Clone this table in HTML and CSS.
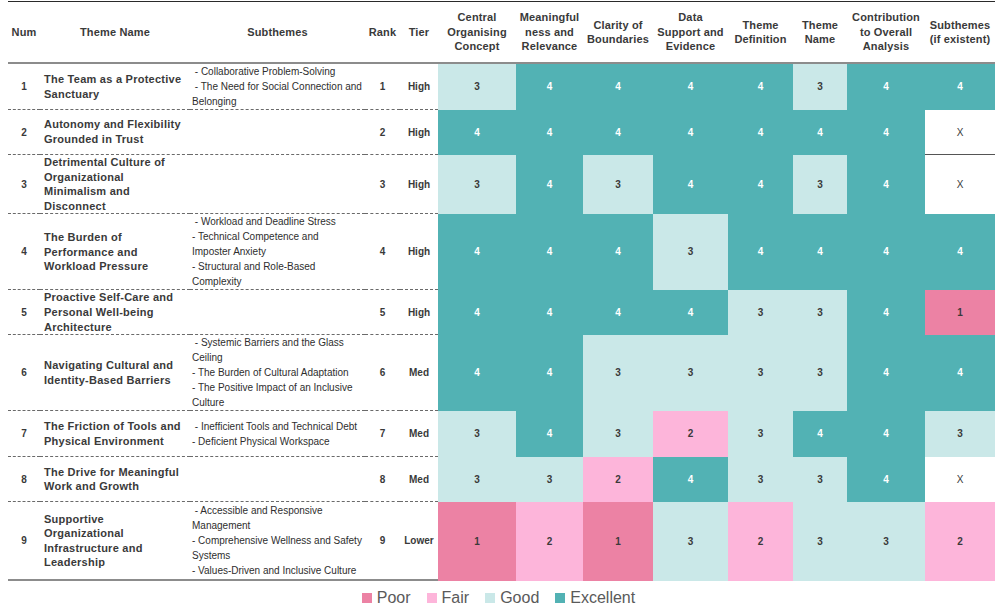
FILE: index.html
```html
<!DOCTYPE html>
<html lang="en">
<head>
<meta charset="utf-8">
<title>Theme Evaluation</title>
<link rel="stylesheet" href="styles.css">
</head>
<body>
<div class="wrap">
<table class="grid">
<colgroup>
<col class="w-num"><col class="w-theme"><col class="w-sub"><col class="w-rank"><col class="w-tier">
<col class="w-c1"><col class="w-c2"><col class="w-c3"><col class="w-c4"><col class="w-c5"><col class="w-c6"><col class="w-c7"><col class="w-c8">
</colgroup>
<thead>
<tr class="hdr">
<th>Num</th><th>Theme Name</th><th>Subthemes</th><th>Rank</th><th>Tier</th>
<th>Central<br>Organising<br>Concept</th>
<th>Meaningful<br>ness and<br>Relevance</th>
<th>Clarity of<br>Boundaries</th>
<th>Data<br>Support and<br>Evidence</th>
<th>Theme<br>Definition</th>
<th>Theme<br>Name</th>
<th>Contribution<br>to Overall<br>Analysis</th>
<th>Subthemes<br>(if existent)</th>
</tr>
</thead>
<tbody>
<tr class="r45">
<td class="num">1</td>
<td class="theme">The Team as a Protective<br>Sanctuary</td>
<td class="sub">&nbsp;- Collaborative Problem-Solving<br>&nbsp;- The Need for Social Connection and<br>Belonging</td>
<td class="num">1</td><td class="tier">High</td>
<td class="c-l">3</td><td class="c-t">4</td><td class="c-t">4</td><td class="c-t">4</td><td class="c-t">4</td><td class="c-l">3</td><td class="c-t">4</td><td class="c-t">4</td>
</tr>
<tr class="r45">
<td class="num">2</td>
<td class="theme">Autonomy and Flexibility<br>Grounded in Trust</td>
<td class="sub"></td>
<td class="num">2</td><td class="tier">High</td>
<td class="c-t">4</td><td class="c-t">4</td><td class="c-t">4</td><td class="c-t">4</td><td class="c-t">4</td><td class="c-t">4</td><td class="c-t">4</td><td class="c-x lined">X</td>
</tr>
<tr class="r59">
<td class="num">3</td>
<td class="theme">Detrimental Culture of<br>Organizational<br>Minimalism and<br>Disconnect</td>
<td class="sub"></td>
<td class="num">3</td><td class="tier">High</td>
<td class="c-l">3</td><td class="c-t">4</td><td class="c-l">3</td><td class="c-t">4</td><td class="c-t">4</td><td class="c-l">3</td><td class="c-t">4</td><td class="c-x">X</td>
</tr>
<tr class="r76">
<td class="num">4</td>
<td class="theme">The Burden of<br>Performance and<br>Workload Pressure</td>
<td class="sub">&nbsp;- Workload and Deadline Stress<br>- Technical Competence and<br>Imposter Anxiety<br>- Structural and Role-Based<br>Complexity</td>
<td class="num">4</td><td class="tier">High</td>
<td class="c-t">4</td><td class="c-t">4</td><td class="c-t">4</td><td class="c-l">3</td><td class="c-t">4</td><td class="c-t">4</td><td class="c-t">4</td><td class="c-t">4</td>
</tr>
<tr class="r45">
<td class="num">5</td>
<td class="theme">Proactive Self-Care and<br>Personal Well-being<br>Architecture</td>
<td class="sub"></td>
<td class="num">5</td><td class="tier">High</td>
<td class="c-t">4</td><td class="c-t">4</td><td class="c-t">4</td><td class="c-t">4</td><td class="c-l">3</td><td class="c-l">3</td><td class="c-t">4</td><td class="c-p">1</td>
</tr>
<tr class="r76">
<td class="num">6</td>
<td class="theme">Navigating Cultural and<br>Identity-Based Barriers</td>
<td class="sub">&nbsp;- Systemic Barriers and the Glass<br>Ceiling<br>- The Burden of Cultural Adaptation<br>- The Positive Impact of an Inclusive<br>Culture</td>
<td class="num">6</td><td class="tier">Med</td>
<td class="c-t">4</td><td class="c-t">4</td><td class="c-l">3</td><td class="c-l">3</td><td class="c-l">3</td><td class="c-l">3</td><td class="c-t">4</td><td class="c-t">4</td>
</tr>
<tr class="r46">
<td class="num">7</td>
<td class="theme">The Friction of Tools and<br>Physical Environment</td>
<td class="sub">&nbsp;- Inefficient Tools and Technical Debt<br>- Deficient Physical Workspace</td>
<td class="num">7</td><td class="tier">Med</td>
<td class="c-l">3</td><td class="c-t">4</td><td class="c-l">3</td><td class="c-f">2</td><td class="c-l">3</td><td class="c-t">4</td><td class="c-t">4</td><td class="c-l">3</td>
</tr>
<tr class="r45">
<td class="num">8</td>
<td class="theme">The Drive for Meaningful<br>Work and Growth</td>
<td class="sub"></td>
<td class="num">8</td><td class="tier">Med</td>
<td class="c-l">3</td><td class="c-l">3</td><td class="c-f">2</td><td class="c-t">4</td><td class="c-l">3</td><td class="c-l">3</td><td class="c-t">4</td><td class="c-x">X</td>
</tr>
<tr class="r79 last">
<td class="num">9</td>
<td class="theme">Supportive<br>Organizational<br>Infrastructure and<br>Leadership</td>
<td class="sub">&nbsp;- Accessible and Responsive<br>Management<br>- Comprehensive Wellness and Safety<br>Systems<br>- Values-Driven and Inclusive Culture</td>
<td class="num">9</td><td class="tier">Lower</td>
<td class="c-p">1</td><td class="c-f">2</td><td class="c-p">1</td><td class="c-l">3</td><td class="c-f">2</td><td class="c-l">3</td><td class="c-l">3</td><td class="c-f">2</td>
</tr>
</tbody>
</table>
</div>
<div class="legend">
<span class="item"><span class="sw sw-p"></span>Poor</span>
<span class="item"><span class="sw sw-f"></span>Fair</span>
<span class="item"><span class="sw sw-l"></span>Good</span>
<span class="item"><span class="sw sw-t"></span>Excellent</span>
</div>
</body>
</html>
```

FILE: styles.css
```css
html, body {
  margin: 0;
  padding: 0;
  background: #ffffff;
}

body {
  font-family: "Liberation Sans", Arial, sans-serif;
  color: #3a3a3a;
}

.wrap {
  padding: 1px 0 0 8px;
}

.grid {
  table-layout: fixed;
  border-collapse: separate;
  border-spacing: 0;
  width: 987px;
}

.w-num { width: 32px; }
.w-theme { width: 150px; }
.w-sub { width: 175px; }
.w-rank { width: 35px; }
.w-tier { width: 38px; }
.w-c1 { width: 78px; }
.w-c2 { width: 67px; }
.w-c3 { width: 70px; }
.w-c4 { width: 75px; }
.w-c5 { width: 65px; }
.w-c6 { width: 54px; }
.w-c7 { width: 78px; }
.w-c8 { width: 70px; }

.hdr { height: 63px; }

.hdr th {
  padding: 0;
  font-size: 11px;
  line-height: 14.5px;
  font-weight: 700;
  letter-spacing: 0.15px;
  color: #3a3a3a;
  text-align: center;
  vertical-align: middle;
  border-top: 1px solid #2a2a2a;
  border-bottom: 2px solid #8c8c8c;
  white-space: nowrap;
}

.grid td {
  padding: 0;
  vertical-align: middle;
  text-align: center;
  font-size: 10px;
  font-weight: 700;
  border-bottom: 1px dashed #6a6a6a;
  white-space: nowrap;
}

.r45 { height: 45px; }
.r46 { height: 46px; }
.r59 { height: 59px; }
.r76 { height: 76px; }
.r79 { height: 79px; }

.grid td.theme {
  text-align: left;
  padding-left: 4px;
  font-size: 11px;
  line-height: 14.6px;
  letter-spacing: 0.25px;
  color: #3a3a3a;
}

.grid td.sub {
  text-align: left;
  padding-left: 2px;
  font-size: 10px;
  line-height: 15px;
  font-weight: 400;
  color: #2e2e2e;
}

.grid td.num,
.grid td.tier {
  color: #3a3a3a;
}

.grid td.c-t,
.grid td.c-l,
.grid td.c-f,
.grid td.c-p {
  border-bottom: 1px solid transparent;
}

.c-t { background: #52b2b4; color: #ffffff; }
.c-l { background: #cae8e8; color: #3a3a3a; }
.c-f { background: #fdb5da; color: #3a3a3a; }
.c-p { background: #ec82a4; color: #3a3a3a; }

.grid td.c-x {
  background: #ffffff;
  color: #3a3a3a;
  font-weight: 400;
  border-bottom: 1px solid transparent;
}

.grid td.c-x.lined {
  border-bottom: 1px solid #555555;
}

.last td {
  border-bottom: 2px solid #8c8c8c;
}

.legend {
  display: flex;
  justify-content: center;
  align-items: center;
  gap: 16px;
  padding-top: 7px;
  font-size: 16px;
  line-height: 20px;
  color: #5a5a5a;
}

.item {
  display: flex;
  align-items: center;
}

.sw {
  width: 10px;
  height: 10px;
  margin-right: 5px;
}

.sw-p { background: #ec82a4; }
.sw-f { background: #fdb5da; }
.sw-l { background: #cae8e8; }
.sw-t { background: #52b2b4; }
```
